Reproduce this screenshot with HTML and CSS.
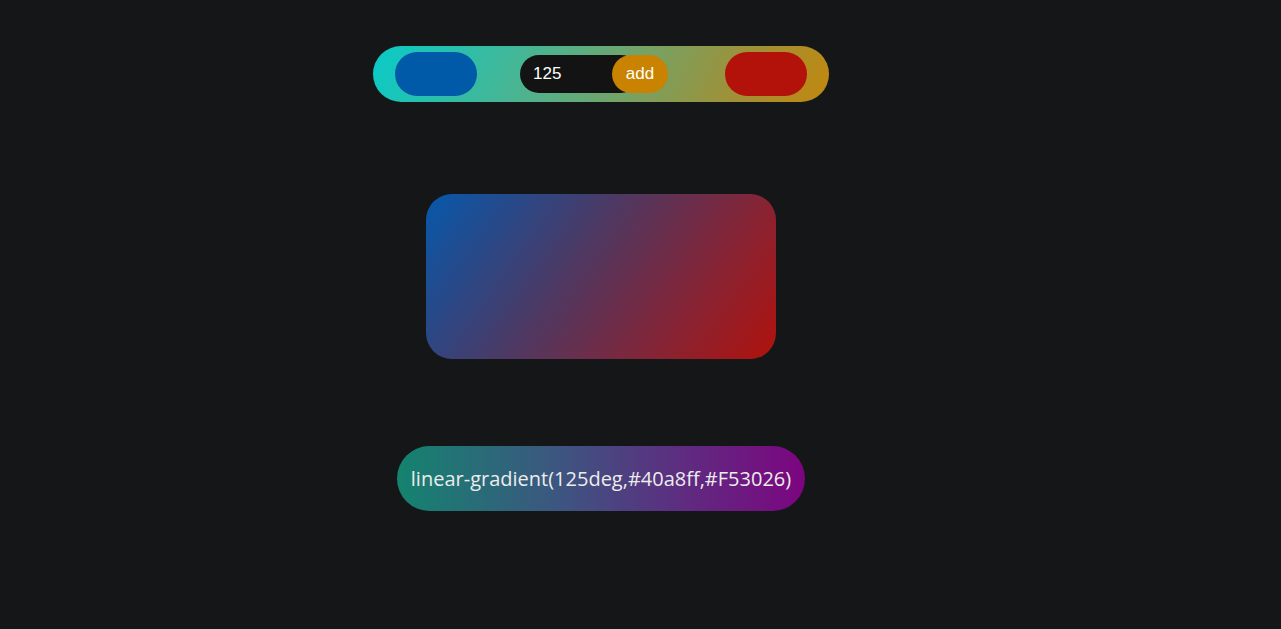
FILE: index.html
```html
<!DOCTYPE html>
<html>
<head>
<meta charset="utf-8">
<link rel="stylesheet" href="styles.css">
</head>
<body>
<main class="page">
  <div class="toolbar">
    <button class="swatch swatch-blue"></button>
    <div class="angle-group">
      <input class="angle-input" type="text" value="125">
      <button class="add-btn">add</button>
    </div>
    <button class="swatch swatch-red"></button>
  </div>
  <div class="preview"></div>
  <div class="code-pill">linear-gradient(125deg,#40a8ff,#F53026)</div>
</main>
</body>
</html>
```
FILE: styles.css
```css
html, body {
  margin: 0;
  padding: 0;
  background: #151618;
}
.page {
  display: flex;
  flex-direction: column;
  align-items: center;
  padding-top: 46px;
  width: 1202px;
}
.toolbar {
  width: 456px;
  height: 56px;
  box-sizing: border-box;
  border-radius: 28px;
  background: linear-gradient(115deg, #08cbc8 0%, #55b088 40%, #a09036 80%, #c2880e 100%);
  display: flex;
  align-items: center;
  padding: 0 22px;
}
.swatch {
  width: 82px;
  height: 44px;
  border: none;
  border-radius: 22px;
  padding: 0;
}
.swatch-blue { background: #005aa8; }
.swatch-red { background: #b3120a; }
.angle-group {
  display: flex;
  align-items: center;
  margin-left: 43px;
  margin-right: 57px;
}
.angle-input {
  width: 120px;
  height: 38px;
  box-sizing: border-box;
  border: none;
  outline: none;
  border-radius: 19px;
  background: #131313;
  color: #ffffff;
  font-family: "Liberation Sans", Arial, sans-serif;
  font-size: 17px;
  padding: 0 0 0 13px;
}
.add-btn {
  width: 56px;
  height: 38px;
  margin-left: -28px;
  border: none;
  border-radius: 19px;
  background: #c98300;
  color: #ffffff;
  font-family: "Liberation Sans", Arial, sans-serif;
  font-size: 17px;
  padding: 0;
  position: relative;
}
.preview {
  margin-top: 92px;
  width: 350px;
  height: 165px;
  border-radius: 26px;
  background: linear-gradient(125deg, #0658ab 0%, #4a3a66 40%, #80263a 70%, #b0120c 100%);
}
.code-pill {
  margin-top: 87px;
  width: 408px;
  height: 65px;
  box-sizing: border-box;
  border-radius: 33px;
  background: linear-gradient(90deg, #14836f 0%, #3d5580 40%, #5e2c80 70%, #7c0580 100%);
  color: #ececec;
  font-family: "Open Sans", "Noto Sans", sans-serif;
  font-size: 20px;
  display: flex;
  align-items: center;
  justify-content: center;
  white-space: nowrap;
}
```
